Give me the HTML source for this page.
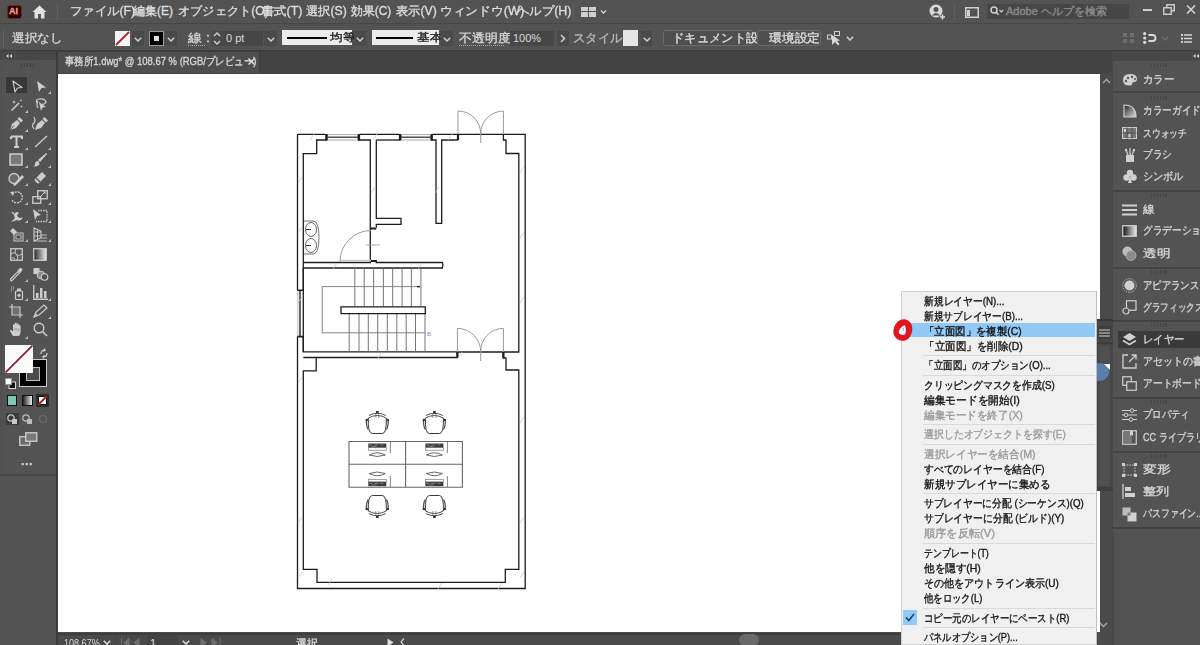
<!DOCTYPE html>
<html><head><meta charset="utf-8">
<style>
*{box-sizing:border-box;margin:0;padding:0}
html,body{width:1200px;height:645px;overflow:hidden;background:#535353;font-family:"Liberation Sans",sans-serif;font-size:11px;color:#d8d8d8;position:relative}
.a{position:absolute}
.t{position:absolute;white-space:nowrap;line-height:1;-webkit-text-stroke:0.35px currentColor}
.cm{font-size:11px}
.n{-webkit-text-stroke:0}
</style></head><body>
<!-- menu bar -->
<div class="a" id="menubar" style="left:0;top:0;width:1200px;height:24px;background:#535353"></div>
<div class="a" style="left:0;top:23px;width:1200px;height:1px;background:#474747"></div>

<!-- MENU CONTENT -->
<div class="a" style="left:8px;top:6px;width:13px;height:12px;background:#2e0000;border-radius:2px;box-shadow:0 0 0 1px #5a3030"></div>
<div class="t" style="left:9px;top:7px;font-size:9px;font-weight:bold;color:#ff9a8a;letter-spacing:0">AI</div>
<svg class="a" style="left:32px;top:5px" width="15" height="14" viewBox="0 0 15 14"><path d="M7.5 0.5 L14.5 7 L12.5 7 L12.5 13.5 L9 13.5 L9 9 L6 9 L6 13.5 L2.5 13.5 L2.5 7 L0.5 7 Z" fill="#e2e2e2"/></svg>
<div class="a" style="left:57px;top:4px;width:1px;height:16px;background:#616161"></div>
<div class="t" style="left:70px;top:5px;font-size:12px;color:#dcdcdc;transform:scaleX(1.029);transform-origin:0 0">ファイル(F)</div>
<div class="t" style="left:133px;top:5px;font-size:12px;color:#dcdcdc;transform:scaleX(1.000);transform-origin:0 0">編集(E)</div>
<div class="t" style="left:178px;top:5px;font-size:12px;color:#dcdcdc;transform:scaleX(1.017);transform-origin:0 0">オブジェクト(O)</div>
<div class="t" style="left:262px;top:5px;font-size:12px;color:#dcdcdc;transform:scaleX(1.024);transform-origin:0 0">書式(T)</div>
<div class="t" style="left:306px;top:5px;font-size:12px;color:#dcdcdc;transform:scaleX(1.018);transform-origin:0 0">選択(S)</div>
<div class="t" style="left:351px;top:5px;font-size:12px;color:#dcdcdc;transform:scaleX(0.989);transform-origin:0 0">効果(C)</div>
<div class="t" style="left:396px;top:5px;font-size:12px;color:#dcdcdc;transform:scaleX(1.021);transform-origin:0 0">表示(V)</div>
<div class="t" style="left:440px;top:5px;font-size:12px;color:#dcdcdc;transform:scaleX(1.062);transform-origin:0 0">ウィンドウ(W)</div>
<div class="t" style="left:517px;top:5px;font-size:12px;color:#dcdcdc;transform:scaleX(1.032);transform-origin:0 0">ヘルプ(H)</div>
<div class="a" style="left:573px;top:4px;width:1px;height:16px;background:#616161"></div>
<svg class="a" style="left:581px;top:7px" width="26" height="10" viewBox="0 0 26 10"><rect x="0" y="0" width="7" height="4" fill="#cfcfcf"/><rect x="8" y="0" width="7" height="4" fill="#cfcfcf"/><rect x="0" y="5" width="7" height="5" fill="#cfcfcf"/><rect x="8" y="5" width="7" height="5" fill="#cfcfcf"/><path d="M20 3.5 L22.5 6 L25 3.5" stroke="#d0d0d0" stroke-width="1.4" fill="none"/></svg>
<svg class="a" style="left:929px;top:4px" width="17" height="16" viewBox="0 0 17 16"><circle cx="7" cy="7" r="6.5" fill="#d8d8d8"/><circle cx="7" cy="5.5" r="2.5" fill="#535353"/><path d="M2.5 11.5 Q7 6.5 11.5 11.5" fill="#535353"/><path d="M11 13 H16 M13.5 10.5 V15.5" stroke="#d8d8d8" stroke-width="1.6"/></svg>
<div class="a" style="left:954px;top:4px;width:1px;height:16px;background:#5f5f5f"></div>
<svg class="a" style="left:965px;top:7px" width="14" height="11" viewBox="0 0 14 11"><rect x="0.75" y="0.75" width="12.5" height="9.5" fill="none" stroke="#d0d0d0" stroke-width="1.5"/><rect x="2" y="3" width="3" height="6" fill="#d0d0d0"/></svg>
<div class="a" style="left:987px;top:4px;width:142px;height:15px;background:#464646"></div>
<svg class="a" style="left:990px;top:6px" width="14" height="10" viewBox="0 0 14 10"><circle cx="4" cy="4" r="3" fill="none" stroke="#d0d0d0" stroke-width="1.5"/><path d="M6 6 L8.5 8.8" stroke="#d0d0d0" stroke-width="1.6"/><path d="M9.5 4 L11.3 5.8 L13.1 4" stroke="#d0d0d0" stroke-width="1.2" fill="none"/></svg>
<div class="t" style="left:1006px;top:6px;font-size:11px;color:#8c8c8c;transform:scaleX(1.000);transform-origin:0 0">Adobe ヘルプを検索</div>
<div class="a" style="left:1143px;top:9px;width:9px;height:2px;background:#d0d0d0"></div>
<svg class="a" style="left:1163px;top:4px" width="12" height="11" viewBox="0 0 12 11"><rect x="3.75" y="0.75" width="7.5" height="6" fill="none" stroke="#d0d0d0" stroke-width="1.4"/><rect x="0.75" y="3.75" width="7.5" height="6.5" fill="#535353" stroke="#d0d0d0" stroke-width="1.4"/></svg>
<svg class="a" style="left:1186px;top:5px" width="10" height="9" viewBox="0 0 10 9"><path d="M1 0.5 L9 8.5 M9 0.5 L1 8.5" stroke="#d0d0d0" stroke-width="1.6"/></svg>

<!-- control bar -->
<div class="a" id="ctrl" style="left:0;top:25px;width:1200px;height:26px;background:#535353"></div>

<!-- CTRL CONTENT -->
<div class="a" style="left:3px;top:30px;width:1px;height:17px;border-left:1px dotted #777"></div>
<div class="t" style="left:12px;top:32px;font-size:12px;color:#d4d4d4;transform:scaleX(1.044);transform-origin:0 0">選択なし</div>
<div class="a" style="left:115px;top:31px;width:15px;height:15px;background:#f4f4f4"></div>
<svg class="a" style="left:115px;top:31px" width="15" height="15"><path d="M1 14 L14 1" stroke="#b0202a" stroke-width="1.8"/></svg>
<div class="a" style="left:132px;top:31px;width:12px;height:15px;background:#4a4a4a"></div>
<svg class="a" style="left:134px;top:37px" width="8" height="5" viewBox="0 0 8 5"><path d="M0.8 0.8 L4 4 L7.2 0.8" stroke="#d0d0d0" stroke-width="1.5" fill="none"/></svg>
<div class="a" style="left:149px;top:31px;width:15px;height:15px;background:#000;border:1px solid #9a9a9a"></div>
<div class="a" style="left:154px;top:36px;width:5px;height:5px;background:#ddd"></div>
<div class="a" style="left:165px;top:31px;width:12px;height:15px;background:#4a4a4a"></div>
<svg class="a" style="left:167px;top:37px" width="8" height="5" viewBox="0 0 8 5"><path d="M0.8 0.8 L4 4 L7.2 0.8" stroke="#d0d0d0" stroke-width="1.5" fill="none"/></svg>
<div class="t" style="left:188px;top:32px;font-size:12px;color:#d4d4d4;transform:scaleX(1.167);transform-origin:0 0">線 :</div>
<div class="a" style="left:188px;top:45px;width:17px;height:1px;border-top:1px dotted #aaa"></div>
<div class="a" style="left:211px;top:31px;width:12px;height:15px;background:#4a4a4a"></div>
<svg class="a" style="left:213px;top:31px" width="8" height="15" viewBox="0 0 8 15"><path d="M1 5 L4 2 L7 5 M1 10 L4 13 L7 10" stroke="#d0d0d0" stroke-width="1.4" fill="none"/></svg>
<div class="a" style="left:223px;top:31px;width:40px;height:15px;background:#474747"></div>
<div class="t n" style="left:226px;top:33px;font-size:11px;color:#dadada">0 pt</div>
<div class="a" style="left:264px;top:31px;width:13px;height:15px;background:#4a4a4a"></div>
<svg class="a" style="left:267px;top:37px" width="8" height="5" viewBox="0 0 8 5"><path d="M0.8 0.8 L4 4 L7.2 0.8" stroke="#d0d0d0" stroke-width="1.5" fill="none"/></svg>
<div class="a" style="left:282px;top:30px;width:70px;height:15px;background:#ececec"></div>
<div class="a" style="left:287px;top:37px;width:40px;height:2px;background:#000"></div>
<div class="t" style="left:330px;top:32px;font-size:11px;color:#222;transform:scaleX(1.150);transform-origin:0 0">均等</div>
<div class="a" style="left:354px;top:31px;width:12px;height:15px;background:#4a4a4a"></div>
<svg class="a" style="left:356px;top:37px" width="8" height="5" viewBox="0 0 8 5"><path d="M0.8 0.8 L4 4 L7.2 0.8" stroke="#d0d0d0" stroke-width="1.5" fill="none"/></svg>
<div class="a" style="left:372px;top:30px;width:67px;height:15px;background:#ececec"></div>
<div class="a" style="left:376px;top:37px;width:37px;height:2px;background:#000"></div>
<div class="t" style="left:417px;top:32px;font-size:11px;color:#222;transform:scaleX(1.144);transform-origin:0 0">基本</div>
<div class="a" style="left:441px;top:31px;width:12px;height:15px;background:#4a4a4a"></div>
<svg class="a" style="left:443px;top:37px" width="8" height="5" viewBox="0 0 8 5"><path d="M0.8 0.8 L4 4 L7.2 0.8" stroke="#d0d0d0" stroke-width="1.5" fill="none"/></svg>
<div class="t" style="left:459px;top:32px;font-size:12px;color:#d4d4d4;transform:scaleX(1.071);transform-origin:0 0">不透明度 :</div>
<div class="a" style="left:459px;top:45px;width:45px;height:1px;border-top:1px dotted #aaa"></div>
<div class="a" style="left:510px;top:31px;width:44px;height:15px;background:#474747"></div>
<div class="t n" style="left:513px;top:33px;font-size:11px;color:#dadada">100%</div>
<div class="a" style="left:557px;top:31px;width:12px;height:15px;background:#4a4a4a"></div>
<svg class="a" style="left:560px;top:34px" width="6" height="9" viewBox="0 0 6 9"><path d="M1 1 L4.5 4.5 L1 8" stroke="#d0d0d0" stroke-width="1.5" fill="none"/></svg>
<div class="t" style="left:573px;top:32px;font-size:12px;color:#b8b8b8;transform:scaleX(1.033);transform-origin:0 0">スタイル :</div>
<div class="a" style="left:623px;top:30px;width:15px;height:16px;background:#e6e6e6"></div>
<div class="a" style="left:641px;top:31px;width:11px;height:15px;background:#4a4a4a"></div>
<svg class="a" style="left:643px;top:37px" width="8" height="5" viewBox="0 0 8 5"><path d="M0.8 0.8 L4 4 L7.2 0.8" stroke="#d0d0d0" stroke-width="1.5" fill="none"/></svg>
<div class="a" style="left:663px;top:30px;width:90px;height:16px;border:1px solid #6a6a6a;border-radius:3px;background:#4f4f4f"></div>
<div class="t" style="left:672px;top:32px;font-size:12px;color:#dcdcdc;transform:scaleX(1.028);transform-origin:0 0">ドキュメント設定</div>
<div class="a" style="left:757px;top:30px;width:64px;height:16px;border:1px solid #6a6a6a;border-radius:3px;background:#4f4f4f"></div>
<div class="t" style="left:769px;top:32px;font-size:12px;color:#dcdcdc;transform:scaleX(1.069);transform-origin:0 0">環境設定</div>
<svg class="a" style="left:827px;top:31px" width="16" height="15" viewBox="0 0 16 15"><rect x="0.5" y="4" width="4" height="4" fill="none" stroke="#cfcfcf" stroke-width="1"/><rect x="7.5" y="0.5" width="5" height="4" fill="none" stroke="#cfcfcf" stroke-width="1"/><path d="M5 4 L5 14 L8 11 L11 14.5 L12.5 13 L10 10 L13 9.5 Z" fill="#d8d8d8"/></svg>
<svg class="a" style="left:846px;top:36px" width="8" height="5" viewBox="0 0 8 5"><path d="M0.8 0.8 L4 4 L7.2 0.8" stroke="#d0d0d0" stroke-width="1.5" fill="none"/></svg>
<svg class="a" style="left:1123px;top:33px" width="11" height="10" viewBox="0 0 11 10"><rect x="0" y="0" width="4" height="4" fill="#6e6e6e"/><rect x="7" y="0" width="4" height="4" fill="#6e6e6e"/><rect x="0" y="6" width="4" height="4" fill="#6e6e6e"/><rect x="7" y="6" width="4" height="4" fill="#6e6e6e"/></svg>
<svg class="a" style="left:1143px;top:32px" width="14" height="12" viewBox="0 0 14 12"><circle cx="1.7" cy="1.7" r="1.6" fill="#dadada"/><circle cx="1.7" cy="6" r="1.6" fill="#dadada"/><circle cx="1.7" cy="10.3" r="1.6" fill="#dadada"/><path d="M5.5 3 H9.5 A3 3 0 0 1 9.5 9 H5.5" stroke="#dadada" stroke-width="1.8" fill="none"/></svg>
<svg class="a" style="left:1161px;top:36px" width="8" height="5" viewBox="0 0 8 5"><path d="M0.8 0.8 L4 4 L7.2 0.8" stroke="#6e6e6e" stroke-width="1.5" fill="none"/></svg>
<svg class="a" style="left:1181px;top:34px" width="11" height="9" viewBox="0 0 11 9"><rect x="0" y="0" width="2" height="2" fill="#d4d4d4"/><rect x="0" y="3.5" width="2" height="2" fill="#d4d4d4"/><rect x="0" y="7" width="2" height="2" fill="#d4d4d4"/><path d="M3 1 H11 M3 4.5 H11 M3 8 H11" stroke="#d4d4d4" stroke-width="1.4"/></svg>

<!-- tab row -->
<div class="a" style="left:0;top:50px;width:1200px;height:24px;background:#434343"></div>
<div class="a" style="left:0;top:50px;width:1200px;height:2px;background:#3c3c3c"></div>
<div class="a" style="left:58px;top:52px;width:201px;height:21px;background:#4e4e4e"></div>
<div class="a" style="left:259px;top:52px;width:2px;height:21px;background:#3f3f3f"></div>
<!-- left toolbar -->
<div class="a" style="left:0;top:51px;width:56px;height:9px;background:#474747"></div>
<div class="a" style="left:0;top:60px;width:56px;height:585px;background:#535353"></div>
<div class="a" style="left:56px;top:51px;width:2px;height:594px;background:#3c3c3c"></div>
<div class="a" style="left:0;top:474px;width:56px;height:2px;background:#464646"></div>
<div class="a" style="left:1px;top:60px;width:1px;height:414px;background:#4d4d4d"></div>
<!-- canvas -->
<div class="a" style="left:58px;top:74px;width:1042px;height:559px;background:#ffffff"></div>
<!-- PLAN -->
<svg class="a" style="left:0;top:0" width="1200" height="645" viewBox="0 0 1200 645"><path d="M297.5 134.3 H325.5 M360 134.3 H399.5 M432.5 134.3 H458 M503.4 134.3 H525.2 V588.5 H297.5 V336.6 M297.5 290.3 V134.3" stroke="#1c1c1c" stroke-width="1.3" fill="none" /><path d="M303.3 290.3 V153.7 H316.7 V140 H327" stroke="#1c1c1c" stroke-width="1.3" fill="none" /><path d="M358 140 H370.3 V262.5 H303.3" stroke="#1c1c1c" stroke-width="1.3" fill="none" /><path d="M376.3 140 H400.3" stroke="#1c1c1c" stroke-width="1.3" fill="none" /><path d="M431 140 H436 V223.4 H441.7 V140 H458" stroke="#1c1c1c" stroke-width="1.3" fill="none" /><path d="M326.5 134 V140.5" stroke="#1c1c1c" stroke-width="2.6" fill="none" /><path d="M358.8 134 V140.5" stroke="#1c1c1c" stroke-width="2.6" fill="none" /><path d="M400.2 134 V140.5" stroke="#1c1c1c" stroke-width="2.6" fill="none" /><path d="M431.6 134 V140.5" stroke="#1c1c1c" stroke-width="2.6" fill="none" /><path d="M328 137.2 H358" stroke="#333" stroke-width="1.3" fill="none" /><path d="M328 134.6 H358 M328 140 H358" stroke="#aaa" stroke-width="1" fill="none" /><path d="M401 137.2 H431" stroke="#333" stroke-width="1.3" fill="none" /><path d="M401 134.6 H431 M401 140 H431" stroke="#aaa" stroke-width="1" fill="none" /><path d="M458 134.3 H503.4" stroke="#1c1c1c" stroke-width="1.3" fill="none" /><path d="M458 140 V134.3" stroke="#1c1c1c" stroke-width="2.2" fill="none" /><path d="M503.4 134.3 V140 H506 V153.5 H518.8 V352 H503.4" stroke="#1c1c1c" stroke-width="1.3" fill="none" /><path d="M376.3 140 V218.4 H401 V224.3 H376.3 V227.7" stroke="#1c1c1c" stroke-width="1.3" fill="none" /><path d="M371 228.5 H376.3 M371 261 H376.3" stroke="#1c1c1c" stroke-width="2.2" fill="none" /><path d="M376.3 260 V262.5 H442.4 Q443.5 265 442.4 268 H303.3 V351.9 H457.4" stroke="#1c1c1c" stroke-width="1.3" fill="none" /><path d="M300 290.3 V336.6" stroke="#333" stroke-width="1.5" fill="none" /><path d="M297.8 290.3 V336.6" stroke="#aaa" stroke-width="0.8" fill="none" /><path d="M340 260.5 H371" stroke="#cfcfcf" stroke-width="1.6" fill="none" /><path d="M297.5 290.3 H303.3 M297.5 336.6 H303.3" stroke="#1c1c1c" stroke-width="1.6" fill="none" /><path d="M303.3 336.6 V351.9" stroke="#1c1c1c" stroke-width="1.3" fill="none" /><path d="M354.8 268 V306.8" stroke="#666" stroke-width="0.9" fill="none" /><path d="M364.2 268 V306.8" stroke="#666" stroke-width="0.9" fill="none" /><path d="M373.6 268 V306.8" stroke="#666" stroke-width="0.9" fill="none" /><path d="M383.4 268 V306.8" stroke="#666" stroke-width="0.9" fill="none" /><path d="M392.7 268 V306.8" stroke="#666" stroke-width="0.9" fill="none" /><path d="M402.1 268 V306.8" stroke="#666" stroke-width="0.9" fill="none" /><path d="M411.4 268 V306.8" stroke="#666" stroke-width="0.9" fill="none" /><path d="M420.9 268 V306.8" stroke="#666" stroke-width="0.9" fill="none" /><path d="M349.2 313.6 V352" stroke="#666" stroke-width="0.9" fill="none" /><path d="M359 313.6 V352" stroke="#666" stroke-width="0.9" fill="none" /><path d="M368.3 313.6 V352" stroke="#666" stroke-width="0.9" fill="none" /><path d="M377.7 313.6 V352" stroke="#666" stroke-width="0.9" fill="none" /><path d="M387.3 313.6 V352" stroke="#666" stroke-width="0.9" fill="none" /><path d="M396.8 313.6 V352" stroke="#666" stroke-width="0.9" fill="none" /><path d="M406.2 313.6 V352" stroke="#666" stroke-width="0.9" fill="none" /><path d="M415.5 313.6 V352" stroke="#666" stroke-width="0.9" fill="none" /><path d="M425 313.6 V352" stroke="#666" stroke-width="0.9" fill="none" /><path d="M341 306.8 H425.3 V313.6 H341 Z" stroke="#1c1c1c" stroke-width="1.3" fill="none" /><path d="M420 286.6 H322.2 V332.8 H425" stroke="#777" stroke-width="0.9" fill="none" /><path d="M417 286.6 L420 286.6" stroke="#333" stroke-width="1.5" fill="none" /><text x="427" y="336" font-size="6" fill="#8080c0" font-family="Liberation Sans">B</text><path d="M303.3 357.5 H316.2 V370.8 H303.3 V569.3 H317 V582.3 H505.3 V569.3 H518.8 V370 H506 V358 H503.4 V352" stroke="#1c1c1c" stroke-width="1.3" fill="none" /><path d="M316.2 357.5 H457.4 V352" stroke="#1c1c1c" stroke-width="1.3" fill="none" /><path d="M457.4 352 V357.5" stroke="#1c1c1c" stroke-width="2.2" fill="none" /><path d="M503.4 352 V358" stroke="#1c1c1c" stroke-width="2.2" fill="none" /><path d="M457.4 352 H503.4" stroke="#1c1c1c" stroke-width="1.3" fill="none" /><path d="M458 134 V111 A22.7 22.7 0 0 1 480.7 134 M503.4 134 V111 A22.7 22.7 0 0 0 480.7 134 M480.7 130 V143" stroke="#9a9a9a" stroke-width="1" fill="none" /><path d="M457.4 352 V328.4 A23.3 23.3 0 0 1 480.7 352 M503.4 352 V328.4 A22.7 22.7 0 0 0 480.7 352 M480.7 348 V361" stroke="#9a9a9a" stroke-width="1" fill="none" /><path d="M340 261.5 A31 31 0 0 1 371 230.5" stroke="#9a9a9a" stroke-width="1" fill="none" /><path d="M366 245 H380" stroke="#9a9a9a" stroke-width="0.8" fill="none" /><path d="M304 221 H313 Q319 221 319 237.5 Q319 254 313 254 H304" stroke="#777" stroke-width="1" fill="none" /><ellipse cx="311" cy="229.5" rx="5.5" ry="7" stroke="#555" stroke-width="0.9" fill="none"/><ellipse cx="311" cy="245.5" rx="5.5" ry="7" stroke="#555" stroke-width="0.9" fill="none"/><path d="M306 229.5 H311 M306 245.5 H311" stroke="#333" stroke-width="1.2" fill="none" /><path d="M349 441.5 H462.4 V487.3 H349 Z M405.6 441.5 V487.3 M349 464.2 H462.4" stroke="#666" stroke-width="1.1" fill="none" /><rect x="368.3" y="443.5" width="18" height="4.2" fill="#3a3a3a"/><path d="M369.3 445 h3 M374.3 445 h4 M380.3 445 h3 M371.3 446.5 h5" stroke="#aaa" stroke-width="0.6"/><rect x="368.3" y="447.7" width="18" height="2.5" fill="none" stroke="#777" stroke-width="0.7"/><path d="M369.3 455 Q377.3 450.5 385.3 455 Q377.3 458 369.3 455 Z" stroke="#555" stroke-width="0.9" fill="none" fill="#bbb"/><path d="M390.3 442 V453" stroke="#666" stroke-width="0.8" fill="none" /><rect x="368.3" y="482" width="18" height="4.2" fill="#3a3a3a"/><path d="M369.3 483.5 h3 M374.3 483.5 h4 M380.3 483.5 h3 M371.3 485 h5" stroke="#aaa" stroke-width="0.6"/><rect x="368.3" y="479.3" width="18" height="2.5" fill="none" stroke="#777" stroke-width="0.7"/><path d="M369.3 473.5 Q377.3 478 385.3 473.5 Q377.3 470.5 369.3 473.5 Z" stroke="#555" stroke-width="0.9" fill="none" fill="#bbb"/><path d="M390.3 476 V487" stroke="#666" stroke-width="0.8" fill="none" /><path d="M368.3 418 Q367.8 433.5 372.3 433.5 H382.3 Q386.8 433.5 386.3 418" stroke="#3a3a3a" stroke-width="1" fill="none"/><path d="M368.3 418 Q377.3 413 386.3 418 M368.8 415.5 Q377.3 411 385.8 415.5" stroke="#3a3a3a" stroke-width="0.9" fill="none"/><path d="M375.8 413.5 V418 M378.8 413.5 V418" stroke="#555" stroke-width="0.6" fill="none"/><rect x="376.0" y="411" width="2.6" height="2.5" fill="#333"/><path d="M366.3 419.5 Q366.3 427 368.3 429.5 M388.3 419.5 Q388.3 427 386.3 429.5" stroke="#555" stroke-width="1.3" fill="none"/><circle cx="366.8" cy="420" r="1.2" fill="#333"/><circle cx="387.8" cy="420" r="1.2" fill="#333"/><g transform="translate(0 929) scale(1 -1)"><path d="M368.3 418 Q367.8 433.5 372.3 433.5 H382.3 Q386.8 433.5 386.3 418" stroke="#3a3a3a" stroke-width="1" fill="none"/><path d="M368.3 418 Q377.3 413 386.3 418 M368.8 415.5 Q377.3 411 385.8 415.5" stroke="#3a3a3a" stroke-width="0.9" fill="none"/><path d="M375.8 413.5 V418 M378.8 413.5 V418" stroke="#555" stroke-width="0.6" fill="none"/><rect x="376.0" y="411" width="2.6" height="2.5" fill="#333"/><path d="M366.3 419.5 Q366.3 427 368.3 429.5 M388.3 419.5 Q388.3 427 386.3 429.5" stroke="#555" stroke-width="1.3" fill="none"/><circle cx="366.8" cy="420" r="1.2" fill="#333"/><circle cx="387.8" cy="420" r="1.2" fill="#333"/></g><rect x="425.4" y="443.5" width="18" height="4.2" fill="#3a3a3a"/><path d="M426.4 445 h3 M431.4 445 h4 M437.4 445 h3 M428.4 446.5 h5" stroke="#aaa" stroke-width="0.6"/><rect x="425.4" y="447.7" width="18" height="2.5" fill="none" stroke="#777" stroke-width="0.7"/><path d="M426.4 455 Q434.4 450.5 442.4 455 Q434.4 458 426.4 455 Z" stroke="#555" stroke-width="0.9" fill="none" fill="#bbb"/><path d="M447.4 442 V453" stroke="#666" stroke-width="0.8" fill="none" /><rect x="425.4" y="482" width="18" height="4.2" fill="#3a3a3a"/><path d="M426.4 483.5 h3 M431.4 483.5 h4 M437.4 483.5 h3 M428.4 485 h5" stroke="#aaa" stroke-width="0.6"/><rect x="425.4" y="479.3" width="18" height="2.5" fill="none" stroke="#777" stroke-width="0.7"/><path d="M426.4 473.5 Q434.4 478 442.4 473.5 Q434.4 470.5 426.4 473.5 Z" stroke="#555" stroke-width="0.9" fill="none" fill="#bbb"/><path d="M447.4 476 V487" stroke="#666" stroke-width="0.8" fill="none" /><path d="M425.4 418 Q424.9 433.5 429.4 433.5 H439.4 Q443.9 433.5 443.4 418" stroke="#3a3a3a" stroke-width="1" fill="none"/><path d="M425.4 418 Q434.4 413 443.4 418 M425.9 415.5 Q434.4 411 442.9 415.5" stroke="#3a3a3a" stroke-width="0.9" fill="none"/><path d="M432.9 413.5 V418 M435.9 413.5 V418" stroke="#555" stroke-width="0.6" fill="none"/><rect x="433.09999999999997" y="411" width="2.6" height="2.5" fill="#333"/><path d="M423.4 419.5 Q423.4 427 425.4 429.5 M445.4 419.5 Q445.4 427 443.4 429.5" stroke="#555" stroke-width="1.3" fill="none"/><circle cx="423.9" cy="420" r="1.2" fill="#333"/><circle cx="444.9" cy="420" r="1.2" fill="#333"/><g transform="translate(0 929) scale(1 -1)"><path d="M425.4 418 Q424.9 433.5 429.4 433.5 H439.4 Q443.9 433.5 443.4 418" stroke="#3a3a3a" stroke-width="1" fill="none"/><path d="M425.4 418 Q434.4 413 443.4 418 M425.9 415.5 Q434.4 411 442.9 415.5" stroke="#3a3a3a" stroke-width="0.9" fill="none"/><path d="M432.9 413.5 V418 M435.9 413.5 V418" stroke="#555" stroke-width="0.6" fill="none"/><rect x="433.09999999999997" y="411" width="2.6" height="2.5" fill="#333"/><path d="M423.4 419.5 Q423.4 427 425.4 429.5 M445.4 419.5 Q445.4 427 443.4 429.5" stroke="#555" stroke-width="1.3" fill="none"/><circle cx="423.9" cy="420" r="1.2" fill="#333"/><circle cx="444.9" cy="420" r="1.2" fill="#333"/></g><path d="M298 183 L302 177" stroke="#c8c8c8" stroke-width="0.8" fill="none" /><path d="M298 233 L302 227" stroke="#c8c8c8" stroke-width="0.8" fill="none" /><path d="M298 303 L302 297" stroke="#c8c8c8" stroke-width="0.8" fill="none" /><path d="M298 383 L302 377" stroke="#c8c8c8" stroke-width="0.8" fill="none" /><path d="M298 523 L302 517" stroke="#c8c8c8" stroke-width="0.8" fill="none" /><path d="M298 578 L302 572" stroke="#c8c8c8" stroke-width="0.8" fill="none" /><path d="M520 173 L524 167" stroke="#c8c8c8" stroke-width="0.8" fill="none" /><path d="M520 238 L524 232" stroke="#c8c8c8" stroke-width="0.8" fill="none" /><path d="M520 303 L524 297" stroke="#c8c8c8" stroke-width="0.8" fill="none" /><path d="M520 423 L524 417" stroke="#c8c8c8" stroke-width="0.8" fill="none" /><path d="M520 523 L524 517" stroke="#c8c8c8" stroke-width="0.8" fill="none" /><path d="M520 578 L524 572" stroke="#c8c8c8" stroke-width="0.8" fill="none" /><path d="M328 585 L332 579" stroke="#c8c8c8" stroke-width="0.8" fill="none" /><path d="M438 589 L442 583" stroke="#c8c8c8" stroke-width="0.8" fill="none" /><path d="M378 358 L382 352" stroke="#c8c8c8" stroke-width="0.8" fill="none" /><path d="M458 358 L462 352" stroke="#c8c8c8" stroke-width="0.8" fill="none" /><path d="M333 269 L337 263" stroke="#c8c8c8" stroke-width="0.8" fill="none" /><path d="M418 269 L422 263" stroke="#c8c8c8" stroke-width="0.8" fill="none" /><path d="M435 193 L439 187" stroke="#c8c8c8" stroke-width="0.8" fill="none" /><path d="M371 193 L375 187" stroke="#c8c8c8" stroke-width="0.8" fill="none" /><path d="M373 140 L377 134" stroke="#c8c8c8" stroke-width="0.8" fill="none" /><path d="M448 140 L452 134" stroke="#c8c8c8" stroke-width="0.8" fill="none" /><path d="M310 140 L314 134" stroke="#c8c8c8" stroke-width="0.8" fill="none" /><path d="M498 589 L502 583" stroke="#c8c8c8" stroke-width="0.8" fill="none" /></svg>
<!-- v scrollbar -->
<div class="a" style="left:1100px;top:73px;width:12px;height:559px;background:#4a4a4a"></div>
<!-- status bar -->
<div class="a" style="left:58px;top:632px;width:1054px;height:13px;background:#4a4a4a"></div>
<!-- right dock -->
<div class="a" style="left:1112px;top:51px;width:88px;height:594px;background:#484848"></div>
<div class="a" style="left:1114px;top:529px;width:86px;height:116px;background:#515151"></div>
<div class="a" style="left:1113px;top:61px;width:87px;height:470px;background:#535353"></div>


<!-- TAB CONTENT -->
<svg class="a" style="left:6px;top:54px" width="6" height="4" viewBox="0 0 6 4"><path d="M2.5 0 L0 2 L2.5 4 Z M6 0 L3.5 2 L6 4 Z" fill="#d8d8d8"/></svg>
<div class="a" style="left:21px;top:63px;width:15px;height:4px;background:repeating-linear-gradient(90deg,#3e3e3e 0 1.5px,transparent 1.5px 3px)"></div>
<div class="t" style="left:65px;top:56px;font-size:11px;color:#d6d6d6;transform:scaleX(0.859);transform-origin:0 0">事務所1.dwg* @ 108.67 % (RGB/プレビュー)</div>
<svg class="a" style="left:248px;top:58px" width="7" height="7" viewBox="0 0 7 7"><path d="M0.5 0.5 L6.5 6.5 M6.5 0.5 L0.5 6.5" stroke="#e0e0e0" stroke-width="1.5"/></svg>
<!-- TOOLS -->
<div class="a" style="left:6px;top:77px;width:21px;height:16px;background:#383838"></div>
<svg class="a" style="left:12px;top:80px" width="11" height="13" viewBox="0 0 11 13"><path d="M1 1 L10 7.5 L5.5 8 L3 12 Z" fill="none" stroke="#cdcdcd" stroke-width="1.2" stroke-linejoin="round"/></svg>
<svg class="a" style="left:36px;top:80px" width="11" height="13" viewBox="0 0 11 13"><path d="M1 1 L10 7.5 L5.5 8 L3 12 Z" fill="#cdcdcd"/></svg><svg class="a" style="left:48px;top:91px" width="3" height="3" viewBox="0 0 3 3"><path d="M3 0 L3 3 L0 3 Z" fill="#bdbdbd"/></svg>
<svg class="a" style="left:10px;top:98px" width="14" height="14" viewBox="0 0 14 14"><path d="M1.5 12.5 L9 5" stroke="#cdcdcd" stroke-width="1.6"/><path d="M4 2 l0.6 1.4 1.4 0.6 -1.4 0.6 -0.6 1.4 -0.6 -1.4 -1.4 -0.6 1.4 -0.6z M11 1 l0.4 1 1 0.4 -1 0.4 -0.4 1 -0.4 -1 -1 -0.4 1 -0.4z M11.5 7 l0.4 1 1 0.4 -1 0.4 -0.4 1 -0.4 -1 -1 -0.4 1 -0.4z" fill="#cdcdcd"/></svg><svg class="a" style="left:25px;top:110px" width="3" height="3" viewBox="0 0 3 3"><path d="M3 0 L3 3 L0 3 Z" fill="#bdbdbd"/></svg>
<svg class="a" style="left:32px;top:97px" width="16" height="15" viewBox="0 0 16 15"><path d="M5 6 Q3 3 7 2 Q13 1 14 5 Q13 8 10 7" fill="none" stroke="#cdcdcd" stroke-width="1.2"/><path d="M6 4 Q4 8 6 11" fill="none" stroke="#cdcdcd" stroke-width="1.2"/><path d="M7 5 L14 10 L10.5 10.5 L9 14 Z" fill="#cdcdcd"/></svg>
<svg class="a" style="left:9px;top:116px" width="15" height="15" viewBox="0 0 15 15"><path d="M1 14 L3 8 L8 4 L11 7 L7 12 Z" fill="#cdcdcd"/><path d="M8.5 3 L10.5 1 L14 4.5 L12 6.5 Z" fill="#cdcdcd"/><path d="M1 14 L5 9.5" stroke="#535353" stroke-width="1"/></svg><svg class="a" style="left:25px;top:129px" width="3" height="3" viewBox="0 0 3 3"><path d="M3 0 L3 3 L0 3 Z" fill="#bdbdbd"/></svg>
<svg class="a" style="left:31px;top:115px" width="18" height="16" viewBox="0 0 18 16"><path d="M3 14 Q0 10 3 8 Q5 6 3 2" fill="none" stroke="#cdcdcd" stroke-width="1.2"/><path d="M4 15 L6 9 L11 5 L14 8 L10 13 Z" fill="#cdcdcd"/><path d="M11.5 4 L13.5 2 L17 5.5 L15 7.5 Z" fill="#cdcdcd"/></svg>
<svg class="a" style="left:10px;top:135px" width="13" height="13" viewBox="0 0 13 13"><path d="M1 1.5 H12 V4 M1 1.5 V4 M6.5 1.5 V12 M4 12 H9" fill="none" stroke="#cdcdcd" stroke-width="2"/></svg><svg class="a" style="left:25px;top:147px" width="3" height="3" viewBox="0 0 3 3"><path d="M3 0 L3 3 L0 3 Z" fill="#bdbdbd"/></svg>
<svg class="a" style="left:34px;top:135px" width="14" height="13" viewBox="0 0 14 13"><path d="M1 12 L13 1" stroke="#cdcdcd" stroke-width="1.3"/></svg><svg class="a" style="left:48px;top:147px" width="3" height="3" viewBox="0 0 3 3"><path d="M3 0 L3 3 L0 3 Z" fill="#bdbdbd"/></svg>
<svg class="a" style="left:9px;top:153px" width="14" height="13" viewBox="0 0 14 13"><rect x="1" y="1" width="12" height="11" fill="#7a7a7a" stroke="#cdcdcd" stroke-width="1.5"/></svg><svg class="a" style="left:25px;top:165px" width="3" height="3" viewBox="0 0 3 3"><path d="M3 0 L3 3 L0 3 Z" fill="#bdbdbd"/></svg>
<svg class="a" style="left:33px;top:153px" width="14" height="14" viewBox="0 0 14 14"><path d="M13.5 0.5 L7 8 L6 7 Z" fill="#cdcdcd" stroke="#cdcdcd" stroke-width="1.2"/><path d="M5.5 8 Q2 8 2 11 Q2 13 0.5 13.5 Q5 14 6.5 11 Z" fill="#cdcdcd"/></svg><svg class="a" style="left:48px;top:165px" width="3" height="3" viewBox="0 0 3 3"><path d="M3 0 L3 3 L0 3 Z" fill="#bdbdbd"/></svg>
<svg class="a" style="left:8px;top:171px" width="18" height="15" viewBox="0 0 18 15"><circle cx="6" cy="7.5" r="5" fill="#6a6a6a" stroke="#cdcdcd" stroke-width="1.3"/><path d="M5 14 L14 4 L16 6 L7 15 Z" fill="#cdcdcd"/></svg><svg class="a" style="left:25px;top:183px" width="3" height="3" viewBox="0 0 3 3"><path d="M3 0 L3 3 L0 3 Z" fill="#bdbdbd"/></svg>
<svg class="a" style="left:33px;top:171px" width="14" height="14" viewBox="0 0 14 14"><path d="M9 1 L13 5 L6 12 Q5 13 4 12 L2 10 Q1 9 2 8 Z" fill="#cdcdcd"/><path d="M3 7 L7 11" stroke="#535353" stroke-width="1.2"/></svg><svg class="a" style="left:48px;top:183px" width="3" height="3" viewBox="0 0 3 3"><path d="M3 0 L3 3 L0 3 Z" fill="#bdbdbd"/></svg>
<svg class="a" style="left:9px;top:190px" width="15" height="14" viewBox="0 0 15 14"><path d="M3.5 4 A5.5 5.5 0 1 1 3 10" fill="none" stroke="#cdcdcd" stroke-width="1.3" stroke-dasharray="2 0.8"/><path d="M1 2 L5 1.5 L4 6 Z" fill="#cdcdcd"/></svg><svg class="a" style="left:25px;top:202px" width="3" height="3" viewBox="0 0 3 3"><path d="M3 0 L3 3 L0 3 Z" fill="#bdbdbd"/></svg>
<svg class="a" style="left:32px;top:190px" width="16" height="14" viewBox="0 0 16 14"><rect x="0.75" y="6.75" width="8" height="6.5" fill="none" stroke="#cdcdcd" stroke-width="1.3"/><rect x="5.75" y="0.75" width="9.5" height="8" fill="none" stroke="#cdcdcd" stroke-width="1.3"/><path d="M9 6 L13 2 M11 2 H13 V4" stroke="#cdcdcd" stroke-width="1"/></svg><svg class="a" style="left:48px;top:202px" width="3" height="3" viewBox="0 0 3 3"><path d="M3 0 L3 3 L0 3 Z" fill="#bdbdbd"/></svg>
<svg class="a" style="left:9px;top:209px" width="16" height="14" viewBox="0 0 16 14"><path d="M2 13 L6 9 Q4 6 6 4 Q8 2 10 4 Q7 6 9 8 Q12 10 14 8 Q12 13 8 11 Z" fill="#cdcdcd"/><path d="M3 3 L5 5" stroke="#cdcdcd" stroke-width="1.2"/></svg><svg class="a" style="left:25px;top:220px" width="3" height="3" viewBox="0 0 3 3"><path d="M3 0 L3 3 L0 3 Z" fill="#bdbdbd"/></svg>
<svg class="a" style="left:32px;top:208px" width="16" height="15" viewBox="0 0 16 15"><path d="M1 1 L9 7 L5 8 L3 12 Z" fill="#cdcdcd"/><path d="M6 2.5 H15 V13.5 H4" fill="none" stroke="#cdcdcd" stroke-width="1.3" stroke-dasharray="1.5 1"/></svg><svg class="a" style="left:48px;top:220px" width="3" height="3" viewBox="0 0 3 3"><path d="M3 0 L3 3 L0 3 Z" fill="#bdbdbd"/></svg>
<svg class="a" style="left:9px;top:227px" width="15" height="15" viewBox="0 0 15 15"><path d="M1 4 L4 1 L8 5 L5 8 Z" fill="#cdcdcd"/><rect x="5" y="6" width="9" height="8" fill="none" stroke="#cdcdcd" stroke-width="1"/><rect x="7" y="8" width="5" height="4" fill="none" stroke="#cdcdcd" stroke-width="0.8"/></svg><svg class="a" style="left:25px;top:239px" width="3" height="3" viewBox="0 0 3 3"><path d="M3 0 L3 3 L0 3 Z" fill="#bdbdbd"/></svg>
<svg class="a" style="left:33px;top:227px" width="15" height="15" viewBox="0 0 15 15"><path d="M1 1 L8 4 V11 L1 14 Z" fill="none" stroke="#cdcdcd" stroke-width="1.1"/><path d="M1 5 H8 M1 9 H8 M4.5 2.5 V12.5 M8 8 H14 M8 11 H14 M1 14 H14" stroke="#cdcdcd" stroke-width="0.9"/></svg><svg class="a" style="left:48px;top:239px" width="3" height="3" viewBox="0 0 3 3"><path d="M3 0 L3 3 L0 3 Z" fill="#bdbdbd"/></svg>
<svg class="a" style="left:10px;top:248px" width="13" height="13" viewBox="0 0 13 13"><rect x="0.75" y="0.75" width="11.5" height="11.5" fill="none" stroke="#cdcdcd" stroke-width="1.3"/><path d="M1 6 Q4 3 6 6 Q8 9 12 6 M6 1 Q4 5 6.5 6.5 Q9 9 7 12 M2 10 Q4 9 5 11" fill="none" stroke="#cdcdcd" stroke-width="1"/></svg>
<svg class="a" style="left:33px;top:248px" width="14" height="13" viewBox="0 0 14 13"><defs><linearGradient id="g1" x1="0" x2="1"><stop offset="0" stop-color="#222"/><stop offset="1" stop-color="#eee"/></linearGradient></defs><rect x="0.75" y="0.75" width="12.5" height="11.5" fill="url(#g1)" stroke="#cdcdcd" stroke-width="1.3"/></svg>
<svg class="a" style="left:9px;top:267px" width="15" height="15" viewBox="0 0 15 15"><path d="M2 14 L1.5 12 L9 4.5 L10.5 6 L3 13.5 Z" fill="none" stroke="#cdcdcd" stroke-width="1.1"/><path d="M8.5 3.5 L11 1 Q13 0.5 13.5 2.5 L11.5 6 Z" fill="#cdcdcd"/></svg><svg class="a" style="left:25px;top:279px" width="3" height="3" viewBox="0 0 3 3"><path d="M3 0 L3 3 L0 3 Z" fill="#bdbdbd"/></svg>
<svg class="a" style="left:33px;top:267px" width="16" height="14" viewBox="0 0 16 14"><rect x="0.5" y="1" width="6" height="6" fill="#cdcdcd"/><circle cx="8" cy="8" r="3.8" fill="#8a8a8a" stroke="#cdcdcd" stroke-width="1"/><circle cx="11.5" cy="10" r="3.3" fill="#535353" stroke="#cdcdcd" stroke-width="1.1"/></svg>
<svg class="a" style="left:10px;top:286px" width="14" height="14" viewBox="0 0 14 14"><path d="M1 1 h1 M3 1 h1 M1 3 h1 M3 3 h1 M1 5 h1" stroke="#cdcdcd" stroke-width="1"/><rect x="5.5" y="5" width="7" height="8.5" rx="1" fill="none" stroke="#cdcdcd" stroke-width="1.2"/><rect x="7" y="2.5" width="4" height="2.5" fill="#cdcdcd"/><circle cx="9" cy="9.3" r="1.6" fill="#cdcdcd"/></svg><svg class="a" style="left:25px;top:298px" width="3" height="3" viewBox="0 0 3 3"><path d="M3 0 L3 3 L0 3 Z" fill="#bdbdbd"/></svg>
<svg class="a" style="left:33px;top:285px" width="15" height="15" viewBox="0 0 15 15"><path d="M0.75 0 V14.25 H15" fill="none" stroke="#cdcdcd" stroke-width="1.3"/><rect x="3" y="8" width="2.5" height="5" fill="#cdcdcd"/><rect x="7" y="3" width="2.5" height="10" fill="#cdcdcd"/><rect x="11" y="6" width="2.5" height="7" fill="#cdcdcd"/></svg><svg class="a" style="left:48px;top:298px" width="3" height="3" viewBox="0 0 3 3"><path d="M3 0 L3 3 L0 3 Z" fill="#bdbdbd"/></svg>
<svg class="a" style="left:9px;top:304px" width="15" height="14" viewBox="0 0 15 14"><path d="M3 0 V11 H14 M0 3 H11 V14" fill="none" stroke="#cdcdcd" stroke-width="1.2"/><rect x="4" y="4" width="6" height="6" fill="#707070"/></svg>
<svg class="a" style="left:33px;top:304px" width="15" height="14" viewBox="0 0 15 14"><path d="M1 13 L3 8 L11 1 L14 4 L6 11 Z" fill="none" stroke="#cdcdcd" stroke-width="1.2"/><path d="M1 13 L4 10" stroke="#cdcdcd" stroke-width="1.5"/></svg><svg class="a" style="left:48px;top:316px" width="3" height="3" viewBox="0 0 3 3"><path d="M3 0 L3 3 L0 3 Z" fill="#bdbdbd"/></svg>
<svg class="a" style="left:9px;top:322px" width="15" height="15" viewBox="0 0 15 15"><path d="M4 14 L1.2 9.5 Q0.6 8.3 1.6 8 Q2.4 7.8 3.2 8.8 L4 9.8 V3.2 Q4 2.2 4.9 2.2 Q5.8 2.2 5.8 3.2 V7 V1.8 Q5.8 0.8 6.8 0.8 Q7.8 0.8 7.8 1.8 V7 V2.5 Q7.8 1.5 8.8 1.5 Q9.8 1.5 9.8 2.5 V7.5 V4 Q9.8 3 10.7 3 Q11.6 3 11.6 4 V10 Q11.6 13 9.5 14 Z" fill="#cdcdcd"/><path d="M5.8 6 V8.5 M7.8 6 V8.5 M9.8 6.5 V8.8" stroke="#6a6a6a" stroke-width="0.5"/></svg><svg class="a" style="left:25px;top:336px" width="3" height="3" viewBox="0 0 3 3"><path d="M3 0 L3 3 L0 3 Z" fill="#bdbdbd"/></svg>
<svg class="a" style="left:33px;top:322px" width="15" height="15" viewBox="0 0 15 15"><circle cx="6" cy="6" r="4.8" fill="none" stroke="#cdcdcd" stroke-width="1.4"/><path d="M9.5 9.5 L14 14" stroke="#cdcdcd" stroke-width="1.6"/></svg>
<!-- fill/stroke -->
<div class="a" style="left:19px;top:359px;width:28px;height:28px;background:#000;border:1px solid #c8c8c8"></div>
<div class="a" style="left:26px;top:367px;width:14px;height:14px;border:1.5px solid #bdbdbd;background:#4a4a4a"></div>
<div class="a" style="left:5px;top:345px;width:28px;height:28px;background:#fbfbfb"></div>
<svg class="a" style="left:5px;top:345px" width="28" height="28"><path d="M0.5 27.5 L27.5 0.5" stroke="#921a28" stroke-width="1.7"/></svg>
<svg class="a" style="left:39px;top:348px" width="10" height="11" viewBox="0 0 10 11"><path d="M2 6 Q2 2 6 2 L5 0.5 M6 2 L4.5 3.5 M8 5 Q8 9 4 9 L5 10.5 M4 9 L5.5 7.5" fill="none" stroke="#cdcdcd" stroke-width="1.2"/></svg>
<svg class="a" style="left:5px;top:378px" width="11" height="11" viewBox="0 0 11 11"><rect x="4" y="4" width="6.5" height="6.5" fill="#111" stroke="#ddd" stroke-width="1"/><rect x="0.5" y="0.5" width="6" height="6" fill="#fff" stroke="#999" stroke-width="1"/></svg>
<div class="a" style="left:7px;top:395px;width:10px;height:11px;background:#7cc7b8;border:1px solid #111"></div>
<div class="a" style="left:22px;top:395px;width:11px;height:11px;background:linear-gradient(90deg,#222,#eee);border:1px solid #111"></div>
<div class="a" style="left:36px;top:394px;width:13px;height:13px;background:#2e2e2e"></div>
<div class="a" style="left:38px;top:396px;width:9px;height:9px;background:#fff;border:1px solid #111"></div>
<svg class="a" style="left:38px;top:396px" width="9" height="9"><path d="M0 9 L9 0" stroke="#b0202c" stroke-width="2"/></svg>
<div class="a" style="left:6px;top:413px;width:13px;height:12px;background:#3a3a3a"></div>
<svg class="a" style="left:7px;top:414px" width="11" height="10" viewBox="0 0 11 10"><circle cx="4" cy="4" r="3.2" fill="none" stroke="#c8c8c8" stroke-width="1.2"/><rect x="5" y="5" width="5" height="5" fill="#c8c8c8"/></svg>
<svg class="a" style="left:22px;top:414px" width="11" height="10" viewBox="0 0 11 10"><circle cx="4" cy="4" r="3.2" fill="none" stroke="#bdbdbd" stroke-width="1.2"/><rect x="5" y="5" width="5" height="5" fill="#bdbdbd"/></svg>
<svg class="a" style="left:38px;top:414px" width="10" height="10" viewBox="0 0 10 10"><circle cx="5" cy="5" r="3.5" fill="none" stroke="#6a6a6a" stroke-width="1.2"/></svg>
<svg class="a" style="left:19px;top:432px" width="19" height="14" viewBox="0 0 19 14"><rect x="0.75" y="4.75" width="10" height="8.5" fill="#6a6a6a" stroke="#cfcfcf" stroke-width="1.3"/><rect x="6.75" y="0.75" width="11" height="8.5" fill="#7a7a7a" stroke="#cfcfcf" stroke-width="1.3"/></svg>
<div class="t" style="left:21px;top:458px;font-size:12px;color:#d0d0d0;letter-spacing:0px;font-weight:bold">&middot;&middot;&middot;</div>


<!-- DOCK -->
<svg class="a" style="left:1193px;top:54px" width="6" height="4" viewBox="0 0 6 4"><path d="M2.5 0 L0 2 L2.5 4 Z M6 0 L3.5 2 L6 4 Z" fill="#d8d8d8"/></svg>
<div class="a" style="left:1151px;top:63px;width:17px;height:4px;background:repeating-linear-gradient(90deg,#464646 0 1.3px,transparent 1.3px 2.9px)"></div>
<svg class="a" style="left:1122px;top:73px" width="16" height="13" viewBox="0 0 16 13"><path d="M8 1 Q15 1 15 6 Q15 9 12 9 Q10 9 10 11 Q10 12.5 7 12.5 Q1 12.5 1 7 Q1 1 8 1 Z" fill="#d0d0d0"/><circle cx="4" cy="8" r="1.2" fill="#535353"/><circle cx="6" cy="5" r="1.2" fill="#535353"/><circle cx="10" cy="4" r="1.2" fill="#535353"/><circle cx="13" cy="6" r="1" fill="#535353"/></svg>
<div class="t" style="left:1143px;top:74px;font-size:11px;color:#d4d4d4;transform:scaleX(0.946);transform-origin:0 0">カラー</div>
<div class="a" style="left:1113px;top:91px;width:87px;height:2px;background:#424242"></div>
<div class="a" style="left:1151px;top:96px;width:17px;height:4px;background:repeating-linear-gradient(90deg,#464646 0 1.3px,transparent 1.3px 2.9px)"></div>
<svg class="a" style="left:1123px;top:104px" width="14" height="14" viewBox="0 0 14 14"><defs><linearGradient id="cg" x1="0" y1="0" x2="1" y2="1"><stop offset="0" stop-color="#222"/><stop offset="1" stop-color="#ddd"/></linearGradient></defs><path d="M1 1 Q13 1 13 13 H1 Z" fill="url(#cg)" stroke="#d0d0d0" stroke-width="1.2"/></svg>
<div class="t" style="left:1143px;top:105px;font-size:11px;color:#d4d4d4;transform:scaleX(0.875);transform-origin:0 0">カラーガイド</div>
<svg class="a" style="left:1122px;top:127px" width="15" height="12" viewBox="0 0 15 12"><rect x="0.5" y="0.5" width="14" height="11" fill="#777" stroke="#d0d0d0" stroke-width="1"/><path d="M0.5 6 H14.5 M5 0.5 V11.5 M10 0.5 V11.5" stroke="#535353" stroke-width="1"/><rect x="2" y="2" width="2" height="3" fill="#ccc"/><rect x="6.5" y="7" width="2" height="3" fill="#ccc"/></svg>
<div class="t" style="left:1143px;top:128px;font-size:11px;color:#d4d4d4;transform:scaleX(0.800);transform-origin:0 0">スウォッチ</div>
<svg class="a" style="left:1123px;top:147px" width="14" height="15" viewBox="0 0 14 15"><rect x="3" y="8" width="8" height="7" fill="#d0d0d0"/><path d="M5 8 L3 3 M7 8 L7 1 M9 8 L11 3" stroke="#d0d0d0" stroke-width="1.3"/><circle cx="3" cy="3" r="1.2" fill="#d0d0d0"/><circle cx="11" cy="3" r="1.2" fill="#d0d0d0"/></svg>
<div class="t" style="left:1143px;top:149px;font-size:11px;color:#d4d4d4;transform:scaleX(0.875);transform-origin:0 0">ブラシ</div>
<svg class="a" style="left:1123px;top:169px" width="14" height="15" viewBox="0 0 14 15"><circle cx="7" cy="4" r="3.2" fill="#d0d0d0"/><circle cx="3.5" cy="8.5" r="3.2" fill="#d0d0d0"/><circle cx="10.5" cy="8.5" r="3.2" fill="#d0d0d0"/><path d="M7 7 L5 14 H9 Z" fill="#d0d0d0"/></svg>
<div class="t" style="left:1143px;top:171px;font-size:11px;color:#d4d4d4;transform:scaleX(0.919);transform-origin:0 0">シンボル</div>
<div class="a" style="left:1113px;top:190px;width:87px;height:2px;background:#424242"></div>
<div class="a" style="left:1151px;top:193px;width:17px;height:4px;background:repeating-linear-gradient(90deg,#464646 0 1.3px,transparent 1.3px 2.9px)"></div>
<svg class="a" style="left:1122px;top:204px" width="15" height="12" viewBox="0 0 15 12"><path d="M0 1.5 H15 M0 6 H15 M0 10.5 H15" stroke="#d0d0d0" stroke-width="2"/></svg>
<div class="t" style="left:1143px;top:204px;font-size:11px;color:#d4d4d4;transform:scaleX(1.062);transform-origin:0 0">線</div>
<svg class="a" style="left:1122px;top:225px" width="15" height="12" viewBox="0 0 15 12"><defs><linearGradient id="gg" x1="0" x2="1"><stop offset="0" stop-color="#111"/><stop offset="1" stop-color="#eee"/></linearGradient></defs><rect x="0.75" y="0.75" width="13.5" height="10.5" fill="url(#gg)" stroke="#d0d0d0" stroke-width="1.3"/></svg>
<div class="t" style="left:1143px;top:225px;font-size:11px;color:#d4d4d4;transform:scaleX(0.875);transform-origin:0 0">グラデーション</div>
<svg class="a" style="left:1122px;top:246px" width="15" height="15" viewBox="0 0 15 15"><circle cx="5.5" cy="5.5" r="5" fill="#bdbdbd"/><circle cx="9" cy="9.5" r="5" fill="#8a8a8a" stroke="#bdbdbd" stroke-width="0.8"/></svg>
<div class="t" style="left:1143px;top:248px;font-size:11px;color:#d4d4d4;transform:scaleX(1.238);transform-origin:0 0">透明</div>
<div class="a" style="left:1113px;top:267px;width:87px;height:2px;background:#424242"></div>
<div class="a" style="left:1151px;top:270px;width:17px;height:4px;background:repeating-linear-gradient(90deg,#464646 0 1.3px,transparent 1.3px 2.9px)"></div>
<svg class="a" style="left:1122px;top:278px" width="15" height="15" viewBox="0 0 15 15"><circle cx="7.5" cy="7.5" r="5" fill="#d0d0d0"/><circle cx="7.5" cy="7.5" r="6.8" fill="none" stroke="#d0d0d0" stroke-width="1" stroke-dasharray="1 1.2"/></svg>
<div class="t" style="left:1143px;top:280px;font-size:11px;color:#d4d4d4;transform:scaleX(0.848);transform-origin:0 0">アピアランス</div>
<svg class="a" style="left:1122px;top:300px" width="15" height="15" viewBox="0 0 15 15"><rect x="4.5" y="0.75" width="9.5" height="9.5" fill="none" stroke="#d0d0d0" stroke-width="1.2"/><circle cx="4" cy="11" r="3" fill="#535353" stroke="#d0d0d0" stroke-width="1.2"/></svg>
<div class="t" style="left:1143px;top:302px;font-size:11px;color:#d4d4d4;transform:scaleX(0.785);transform-origin:0 0">グラフィックス...</div>
<div class="a" style="left:1113px;top:320px;width:87px;height:2px;background:#424242"></div>
<div class="a" style="left:1151px;top:323px;width:17px;height:4px;background:repeating-linear-gradient(90deg,#464646 0 1.3px,transparent 1.3px 2.9px)"></div>
<div class="a" style="left:1118px;top:331px;width:82px;height:17px;background:#3a3a3a"></div>
<svg class="a" style="left:1122px;top:332px" width="15" height="15" viewBox="0 0 15 15"><path d="M7.5 1 L14 5 L7.5 9 L1 5 Z" fill="#d0d0d0"/><path d="M1 8.5 L7.5 12.5 L14 8.5" fill="none" stroke="#d0d0d0" stroke-width="1.6"/></svg>
<div class="t" style="left:1143px;top:334px;font-size:11px;color:#d4d4d4;transform:scaleX(0.938);transform-origin:0 0">レイヤー</div>
<svg class="a" style="left:1122px;top:354px" width="15" height="15" viewBox="0 0 15 15"><path d="M6 1 H1 V14 H14 V9" fill="none" stroke="#d0d0d0" stroke-width="1.3"/><path d="M7 8 L13.5 1.5 M9.5 1 H14 V5.5" fill="none" stroke="#d0d0d0" stroke-width="1.3"/></svg>
<div class="t" style="left:1143px;top:356px;font-size:11px;color:#d4d4d4;transform:scaleX(0.912);transform-origin:0 0">アセットの書...</div>
<svg class="a" style="left:1122px;top:376px" width="15" height="15" viewBox="0 0 15 15"><rect x="0.75" y="0.75" width="8.5" height="8.5" fill="none" stroke="#d0d0d0" stroke-width="1.2"/><rect x="4.75" y="5.75" width="9.5" height="8.5" fill="#535353" stroke="#d0d0d0" stroke-width="1.2"/></svg>
<div class="t" style="left:1143px;top:378px;font-size:11px;color:#d4d4d4;transform:scaleX(0.890);transform-origin:0 0">アートボード</div>
<div class="a" style="left:1113px;top:397px;width:87px;height:2px;background:#424242"></div>
<div class="a" style="left:1151px;top:400px;width:17px;height:4px;background:repeating-linear-gradient(90deg,#464646 0 1.3px,transparent 1.3px 2.9px)"></div>
<svg class="a" style="left:1122px;top:408px" width="15" height="14" viewBox="0 0 15 14"><path d="M0 2.5 H15 M0 7 H15 M0 11.5 H15" stroke="#d0d0d0" stroke-width="1"/><circle cx="10" cy="2.5" r="1.8" fill="#535353" stroke="#d0d0d0" stroke-width="1"/><circle cx="4" cy="7" r="1.8" fill="#535353" stroke="#d0d0d0" stroke-width="1"/><circle cx="9" cy="11.5" r="1.8" fill="#535353" stroke="#d0d0d0" stroke-width="1"/></svg>
<div class="t" style="left:1143px;top:409px;font-size:11px;color:#d4d4d4;transform:scaleX(0.845);transform-origin:0 0">プロパティ</div>
<svg class="a" style="left:1122px;top:430px" width="15" height="15" viewBox="0 0 15 15"><rect x="0.75" y="0.75" width="13.5" height="13.5" fill="none" stroke="#d0d0d0" stroke-width="1.2"/><rect x="2" y="2" width="8" height="11" fill="#777"/><path d="M8 1 V6 L9.5 4.5 L11 6 V1" fill="#d0d0d0"/></svg>
<div class="t" style="left:1143px;top:432px;font-size:11px;color:#d4d4d4;transform:scaleX(0.820);transform-origin:0 0">CC ライブラリ</div>
<div class="a" style="left:1113px;top:451px;width:87px;height:2px;background:#424242"></div>
<div class="a" style="left:1151px;top:454px;width:17px;height:4px;background:repeating-linear-gradient(90deg,#464646 0 1.3px,transparent 1.3px 2.9px)"></div>
<svg class="a" style="left:1122px;top:463px" width="15" height="14" viewBox="0 0 15 14"><rect x="2" y="2" width="11" height="10" fill="none" stroke="#d0d0d0" stroke-width="1" stroke-dasharray="1.5 1.2"/><rect x="0" y="0" width="3" height="3" fill="#d0d0d0"/><rect x="12" y="0" width="3" height="3" fill="#d0d0d0"/><rect x="0" y="11" width="3" height="3" fill="#d0d0d0"/><rect x="12" y="11" width="3" height="3" fill="#d0d0d0"/></svg>
<div class="t" style="left:1143px;top:464px;font-size:11px;color:#d4d4d4;transform:scaleX(1.250);transform-origin:0 0">変形</div>
<svg class="a" style="left:1122px;top:484px" width="15" height="15" viewBox="0 0 15 15"><path d="M1 0 V15" stroke="#d0d0d0" stroke-width="1.3"/><rect x="3" y="3" width="6" height="4" fill="#d0d0d0"/><rect x="3" y="9" width="10" height="4" fill="#d0d0d0"/></svg>
<div class="t" style="left:1143px;top:486px;font-size:11px;color:#d4d4d4;transform:scaleX(1.188);transform-origin:0 0">整列</div>
<svg class="a" style="left:1122px;top:507px" width="15" height="15" viewBox="0 0 15 15"><rect x="0.5" y="0.5" width="8" height="8" fill="#bbb"/><rect x="5.5" y="5.5" width="9" height="9" fill="#d0d0d0"/><rect x="5.5" y="5.5" width="3" height="3" fill="#777"/></svg>
<div class="t" style="left:1143px;top:508px;font-size:11px;color:#d4d4d4;transform:scaleX(0.807);transform-origin:0 0">パスファイン...</div>
<div class="a" style="left:1113px;top:527px;width:87px;height:2px;background:#424242"></div>


<!-- LAYERS STRIP + SCROLL -->
<svg class="a" style="left:1102px;top:78px" width="9" height="6" viewBox="0 0 9 6"><path d="M1 5 L4.5 1.5 L8 5" stroke="#aaa" stroke-width="1.3" fill="none"/></svg>
<div class="a" style="left:1097px;top:319px;width:16px;height:172px;background:#474747"></div>
<div class="a" style="left:1097px;top:319px;width:16px;height:2px;background:#383838"></div>
<div class="a" style="left:1098px;top:326px;width:13px;height:13px;background:#3d3d3d"></div>
<svg class="a" style="left:1099px;top:329px" width="11" height="8" viewBox="0 0 11 8"><path d="M0 1 H11 M0 4 H11 M0 7 H11" stroke="#cfcfcf" stroke-width="1.2"/></svg>
<div class="a" style="left:1097px;top:342px;width:16px;height:2px;background:#3c3c3c"></div>
<div class="a" style="left:1099px;top:346px;width:11px;height:140px;background:#4f4f4f"></div>
<div class="a" style="left:1097px;top:363px;width:12px;height:18px;background:#5a7fae;border-radius:0 9px 9px 0;filter:blur(0.4px)"></div>
<svg class="a" style="left:1104px;top:364px" width="6" height="6"><path d="M0 0 H6 V6 Z" fill="#fff"/></svg>
<div class="a" style="left:1097px;top:487px;width:16px;height:4px;background:#3f3f3f"></div>
<svg class="a" style="left:1099px;top:622px" width="9" height="6" viewBox="0 0 9 6"><path d="M1 1 L4.5 4.5 L8 1" stroke="#aaa" stroke-width="1.3" fill="none"/></svg>
<!-- STATUS -->
<div class="a" style="left:58px;top:633px;width:843px;height:2px;background:#3e3e3e"></div>
<div class="t n" style="left:64px;top:638px;font-size:11px;color:#d8d8d8;transform:scaleX(0.823);transform-origin:0 0">108.67%</div>
<svg class="a" style="left:103px;top:640px" width="8" height="5" viewBox="0 0 8 5"><path d="M0.8 0.8 L4 4 L7.2 0.8" stroke="#e0e0e0" stroke-width="1.5" fill="none"/></svg>
<div class="a" style="left:115px;top:634px;width:1px;height:11px;background:#444"></div>
<svg class="a" style="left:121px;top:638px" width="20" height="9" viewBox="0 0 20 9"><path d="M0.5 0 V9 M8 0.5 L3 4.5 L8 8.5 Z M18 0.5 L13 4.5 L18 8.5 Z" stroke="#6e6e6e" fill="#6e6e6e" stroke-width="1"/></svg>
<div class="a" style="left:147px;top:635px;width:31px;height:10px;background:#434343"></div>
<div class="t n" style="left:150px;top:638px;font-size:11px;color:#e0e0e0">1</div>
<svg class="a" style="left:182px;top:640px" width="8" height="5" viewBox="0 0 8 5"><path d="M0.8 0.8 L4 4 L7.2 0.8" stroke="#e0e0e0" stroke-width="1.5" fill="none"/></svg>
<svg class="a" style="left:200px;top:638px" width="21" height="9" viewBox="0 0 21 9"><path d="M1 0.5 L6 4.5 L1 8.5 Z M12 0.5 L17 4.5 L12 8.5 Z M20 0 V9" stroke="#6e6e6e" fill="#6e6e6e" stroke-width="1"/></svg>
<div class="t" style="left:296px;top:638px;font-size:11px;color:#d8d8d8;transform:scaleX(0.994);transform-origin:0 0">選択</div>
<svg class="a" style="left:387px;top:638px" width="7" height="9" viewBox="0 0 7 9"><path d="M0.5 0.5 L6.5 4.5 L0.5 8.5 Z" fill="#e0e0e0"/></svg>
<svg class="a" style="left:400px;top:638px" width="5" height="8" viewBox="0 0 5 8"><path d="M4 0.5 L1 4 L4 7.5" stroke="#d0d0d0" stroke-width="1.2" fill="none"/></svg>
<div class="a" style="left:739px;top:634px;width:20px;height:12px;background:#6a6a6a;border-radius:6px"></div>

<!-- CONTEXT MENU -->
<div class="a" style="left:901px;top:291px;width:196px;height:354px;background:#f0f0f0;border:1px solid #cfcfcf;border-right-color:#bdbdbd"></div>
<div class="a" style="left:903px;top:323px;width:192px;height:14px;background:#91c9f7"></div>
<div class="a" style="left:903px;top:610px;width:14px;height:15px;background:#91c9f7"></div>
<svg class="a" style="left:905px;top:613px" width="10" height="9" viewBox="0 0 10 9"><path d="M1 4.5 L3.8 7.5 L9 1" stroke="#1d3c6e" stroke-width="1.5" fill="none"/></svg>
<div class="t cm" style="left:924px;top:296px;color:#141414;transform:scaleX(0.890);transform-origin:0 0">新規レイヤー(N)...</div>
<div class="t cm" style="left:924px;top:311px;color:#141414;transform:scaleX(0.886);transform-origin:0 0">新規サブレイヤー(B)...</div>
<div class="t cm" style="left:924px;top:326px;color:#141414;transform:scaleX(0.946);transform-origin:0 0">「立面図」を複製(C)</div>
<div class="t cm" style="left:924px;top:341px;color:#141414;transform:scaleX(0.956);transform-origin:0 0">「立面図」を削除(D)</div>
<div class="a" style="left:923px;top:355px;width:172px;height:1px;background:#d9d9d9"></div>
<div class="t cm" style="left:924px;top:360px;color:#141414;transform:scaleX(0.868);transform-origin:0 0">「立面図」のオプション(O)...</div>
<div class="a" style="left:923px;top:375px;width:172px;height:1px;background:#d9d9d9"></div>
<div class="t cm" style="left:924px;top:380px;color:#141414;transform:scaleX(0.892);transform-origin:0 0">クリッピングマスクを作成(S)</div>
<div class="t cm" style="left:924px;top:395px;color:#141414;transform:scaleX(0.973);transform-origin:0 0">編集モードを開始(I)</div>
<div class="t cm" style="left:924px;top:410px;color:#9a9a9a;transform:scaleX(0.962);transform-origin:0 0">編集モードを終了(X)</div>
<div class="a" style="left:923px;top:424px;width:172px;height:1px;background:#d9d9d9"></div>
<div class="t cm" style="left:924px;top:429px;color:#9a9a9a;transform:scaleX(0.899);transform-origin:0 0">選択したオブジェクトを探す(E)</div>
<div class="a" style="left:923px;top:444px;width:172px;height:1px;background:#d9d9d9"></div>
<div class="t cm" style="left:924px;top:449px;color:#9a9a9a;transform:scaleX(0.966);transform-origin:0 0">選択レイヤーを結合(M)</div>
<div class="t cm" style="left:924px;top:464px;color:#141414;transform:scaleX(0.893);transform-origin:0 0">すべてのレイヤーを結合(F)</div>
<div class="t cm" style="left:924px;top:479px;color:#141414;transform:scaleX(0.958);transform-origin:0 0">新規サブレイヤーに集める</div>
<div class="a" style="left:923px;top:493px;width:172px;height:1px;background:#d9d9d9"></div>
<div class="t cm" style="left:924px;top:498px;color:#141414;transform:scaleX(0.886);transform-origin:0 0">サブレイヤーに分配 (シーケンス)(Q)</div>
<div class="t cm" style="left:924px;top:513px;color:#141414;transform:scaleX(0.893);transform-origin:0 0">サブレイヤーに分配 (ビルド)(Y)</div>
<div class="t cm" style="left:924px;top:528px;color:#9a9a9a;transform:scaleX(1.018);transform-origin:0 0">順序を反転(V)</div>
<div class="a" style="left:923px;top:543px;width:172px;height:1px;background:#d9d9d9"></div>
<div class="t cm" style="left:924px;top:548px;color:#141414;transform:scaleX(0.810);transform-origin:0 0">テンプレート(T)</div>
<div class="t cm" style="left:924px;top:563px;color:#141414;transform:scaleX(0.958);transform-origin:0 0">他を隠す(H)</div>
<div class="t cm" style="left:924px;top:578px;color:#141414;transform:scaleX(0.916);transform-origin:0 0">その他をアウトライン表示(U)</div>
<div class="t cm" style="left:924px;top:593px;color:#141414;transform:scaleX(0.852);transform-origin:0 0">他をロック(L)</div>
<div class="a" style="left:923px;top:608px;width:172px;height:1px;background:#d9d9d9"></div>
<div class="t cm" style="left:924px;top:613px;color:#141414;transform:scaleX(0.859);transform-origin:0 0">コピー元のレイヤーにペースト(R)</div>
<div class="a" style="left:923px;top:627px;width:172px;height:1px;background:#d9d9d9"></div>
<div class="t cm" style="left:924px;top:632px;color:#141414;transform:scaleX(0.838);transform-origin:0 0">パネルオプション(P)...</div>
<svg class="a" style="left:890px;top:316px" width="26" height="28" viewBox="0 0 26 28"><g transform="rotate(18 13 14)"><path fill-rule="evenodd" fill="#e3141c" d="M13 3.2 C19 3.2 22.5 9 22.2 15 C22 21 18.5 24.8 13 24.8 C7.5 24.8 4 21 3.8 15 C3.6 9 7 3.2 13 3.2 Z M13.2 8.8 C11 10.5 9.4 14 9.5 16.5 C9.6 18.3 11 19 13 19 C15 19 16.6 18.3 16.6 16.5 C16.6 14 15.2 10.5 13.2 8.8 Z"/><path d="M13.2 9.5 C11.3 11 9.9 14 10 16.3 C10.1 17.8 11.2 18.4 13 18.4 C14.8 18.4 16 17.8 16 16.3 C16 14 14.8 11 13.2 9.5 Z" fill="#f4f8fc"/><path d="M12 13 L13 12 L13.5 15" stroke="#9cbfe6" stroke-width="1" fill="none"/></g></svg>
</body></html>
